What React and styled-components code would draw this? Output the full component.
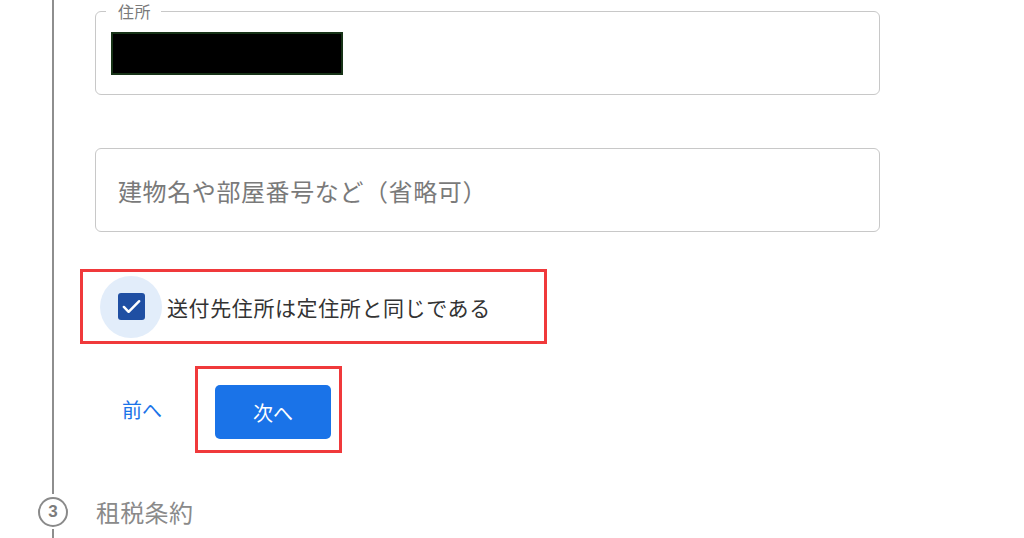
import React from 'react'
import styled, { createGlobalStyle } from 'styled-components'

const GlobalStyle = createGlobalStyle`
  html, body {
    margin: 0;
    padding: 0;
    background: #fff;
    overflow: hidden;
  }
  body {
    font-family: "Noto Sans CJK JP", "Noto Sans", sans-serif;
    color: #333;
  }
`

const Stepper = styled.div`
  margin-left: 38px;
  width: 860px;
`

const Rail = styled.div`
  margin-left: 14px;
  border-left: 2px solid #8e8e8e;
  padding: 11px 0 41px 26px;
`

const Field = styled.div`
  position: relative;
  box-sizing: border-box;
  margin-left: 15px;
  width: 785px;
  height: 84px;
  border: 1px solid #c8c8c8;
  border-radius: 6px;
  display: flex;
  align-items: ${(p) => (p.$top ? 'flex-start' : 'center')};
  padding: ${(p) => (p.$top ? '20px 15px' : '0 22px')};
  margin-top: ${(p) => p.$gap || 0}px;
`

const FieldLabel = styled.span`
  position: absolute;
  top: -11px;
  left: 10px;
  padding: 0 10px 0 12px;
  background: #fff;
  font-size: 16px;
  line-height: 20px;
  color: #7a7a7a;
  letter-spacing: 0.5px;
`

const Redacted = styled.div`
  width: 232px;
  height: 43px;
  box-sizing: border-box;
  background: #000;
  border: 2px solid #173317;
`

const Placeholder = styled.span`
  font-size: 24px;
  color: #7a7a7a;
  letter-spacing: 0.6px;
`

const Highlight = styled.div`
  box-sizing: border-box;
  border: 3px solid #f0393b;
  display: ${(p) => (p.$inline ? 'inline-flex' : 'flex')};
  align-items: center;
`

const CheckRow = styled(Highlight)`
  margin-top: 37px;
  width: 467px;
  height: 75px;
  padding-left: 17px;
`

const Halo = styled.span`
  width: 62px;
  height: 62px;
  border-radius: 50%;
  background: #e2edfa;
  display: flex;
  align-items: center;
  justify-content: center;
  flex-shrink: 0;
`

const Box = styled.span`
  width: 27px;
  height: 27px;
  border-radius: 3px;
  background: #1f4fa3;
  display: flex;
  align-items: center;
  justify-content: center;
`

const CheckText = styled.span`
  margin-left: 5px;
  font-size: 21px;
  color: #333;
  letter-spacing: 0.6px;
`

const Actions = styled.div`
  margin-top: 22px;
  display: flex;
  align-items: center;
`

const BackButton = styled.button`
  border: 0;
  background: none;
  padding: 0;
  margin-left: 42px;
  margin-right: 33px;
  font-family: inherit;
  font-size: 20px;
  color: #1a73e8;
  cursor: pointer;
`

const NextFrame = styled(Highlight)`
  width: 147px;
  height: 87px;
  padding: 16px 0 0 17px;
  align-items: flex-start;
`

const NextButton = styled.button`
  width: 116px;
  height: 54px;
  border: 0;
  border-radius: 5px;
  background: #1a73e8;
  color: #fff;
  font-family: inherit;
  font-size: 20px;
  cursor: pointer;
`

const StepHead = styled.div`
  display: flex;
  align-items: center;
`

const StepNum = styled.span`
  box-sizing: border-box;
  width: 30px;
  height: 30px;
  border-radius: 50%;
  border: 2.5px solid #8a8a8a;
  display: flex;
  align-items: center;
  justify-content: center;
  font-family: "Liberation Sans", Arial, sans-serif;
  font-weight: bold;
  font-size: 17px;
  color: #7c7c7c;
`

const StepTitle = styled.span`
  margin-left: 28px;
  font-size: 24px;
  color: #8a8a8a;
  letter-spacing: 0.3px;
`

const Tail = styled.div`
  margin-left: 14px;
  border-left: 2px solid #8e8e8e;
  height: 30px;
`

export default function App() {
  return (
    <>
      <GlobalStyle />
      <Stepper>
        <Rail>
          <Field $top>
            <FieldLabel>住所</FieldLabel>
            <Redacted />
          </Field>
          <Field $gap={53}>
            <Placeholder>建物名や部屋番号など（省略可）</Placeholder>
          </Field>
          <CheckRow $inline>
            <Halo>
              <Box>
                <svg width="23" height="23" viewBox="0 0 24 24" fill="none">
                  <path d="M4 12.5l5 5L20 6.5" stroke="#fff" strokeWidth="2.6" strokeLinecap="round" strokeLinejoin="round" />
                </svg>
              </Box>
            </Halo>
            <CheckText>送付先住所は定住所と同じである</CheckText>
          </CheckRow>
          <Actions>
            <BackButton>前へ</BackButton>
            <NextFrame>
              <NextButton>次へ</NextButton>
            </NextFrame>
          </Actions>
        </Rail>
        <StepHead>
          <StepNum>3</StepNum>
          <StepTitle>租税条約</StepTitle>
        </StepHead>
        <Tail />
      </Stepper>
    </>
  )
}
